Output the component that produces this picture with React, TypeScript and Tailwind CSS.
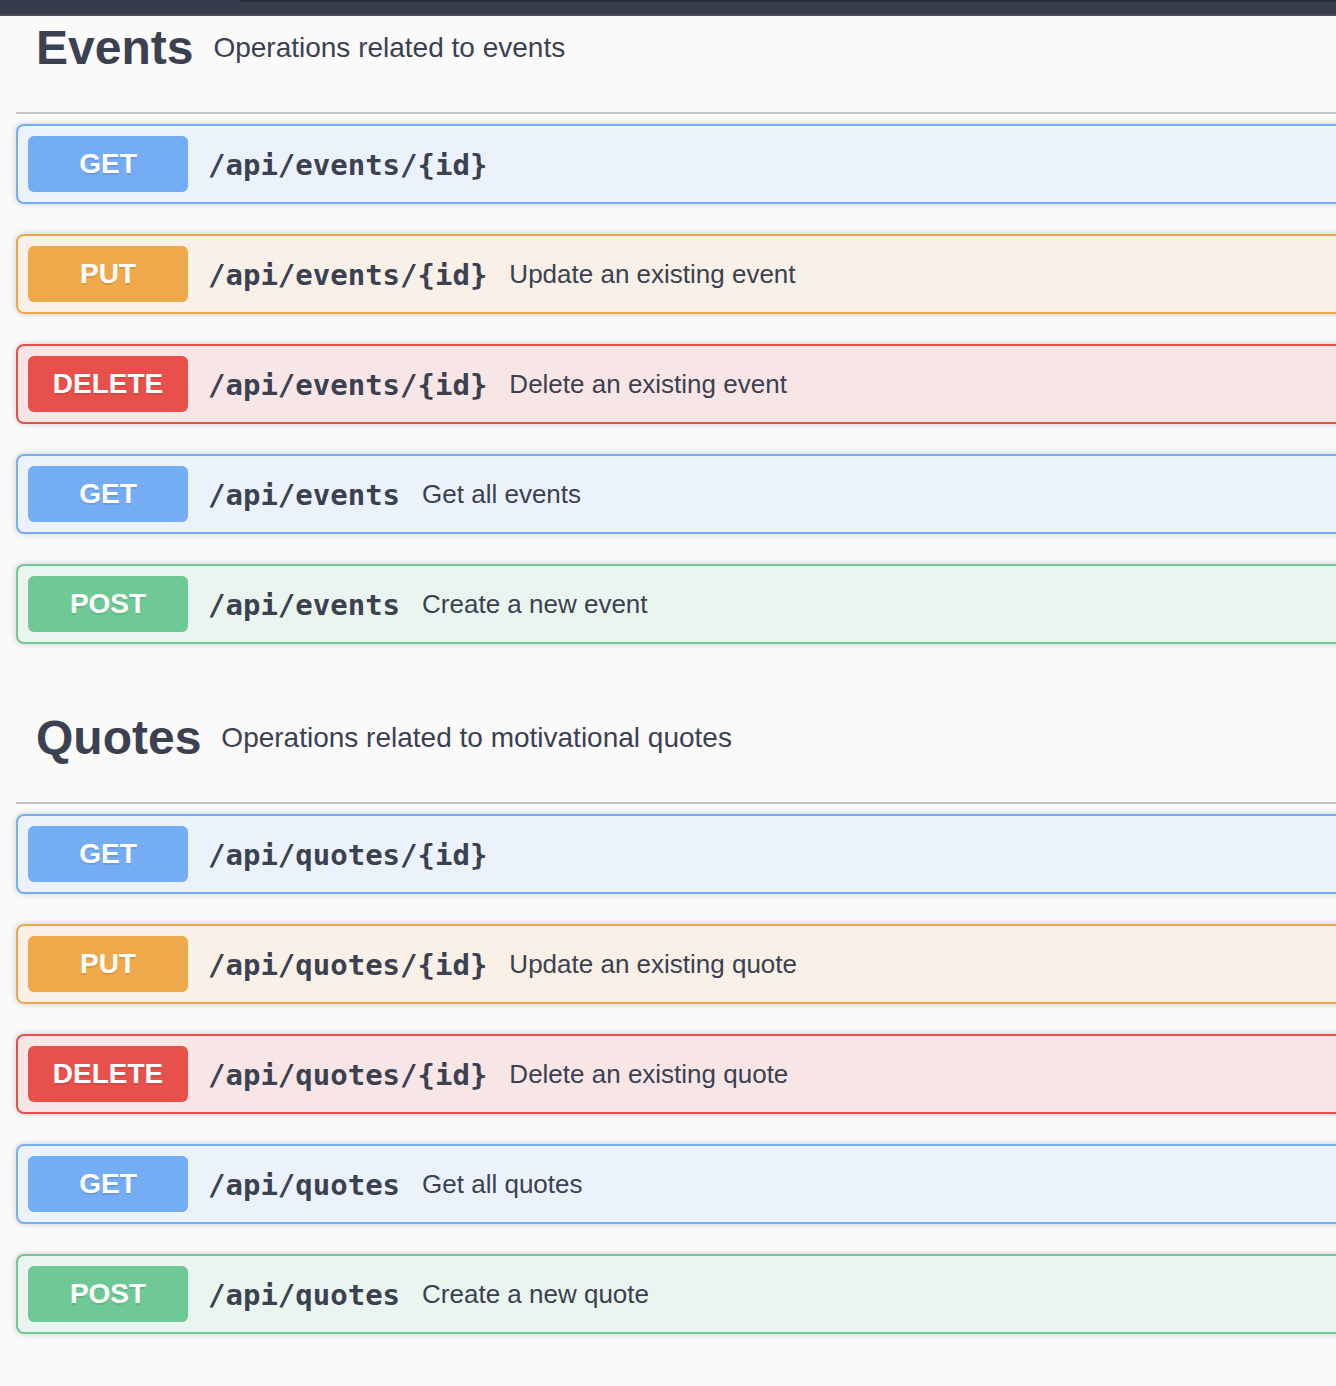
import React from "react";

type Method = "GET" | "PUT" | "DELETE" | "POST";

const styles: Record<Method, { card: string; badge: string }> = {
  GET: { card: "border-[#73adf8] bg-[#ebf2fb]", badge: "bg-[#74acf6]" },
  PUT: { card: "border-[#eea84c] bg-[#f9f0e7]", badge: "bg-[#efa84a]" },
  DELETE: { card: "border-[#e6504c] bg-[#f8e6e6]", badge: "bg-[#e8504b]" },
  POST: { card: "border-[#70c892] bg-[#ebf5ef]", badge: "bg-[#6fc994]" },
};

type Op = { method: Method; path: string; desc?: string };

const sections: { name: string; desc: string; ops: Op[] }[] = [
  {
    name: "Events",
    desc: "Operations related to events",
    ops: [
      { method: "GET", path: "/api/events/{id}" },
      { method: "PUT", path: "/api/events/{id}", desc: "Update an existing event" },
      { method: "DELETE", path: "/api/events/{id}", desc: "Delete an existing event" },
      { method: "GET", path: "/api/events", desc: "Get all events" },
      { method: "POST", path: "/api/events", desc: "Create a new event" },
    ],
  },
  {
    name: "Quotes",
    desc: "Operations related to motivational quotes",
    ops: [
      { method: "GET", path: "/api/quotes/{id}" },
      { method: "PUT", path: "/api/quotes/{id}", desc: "Update an existing quote" },
      { method: "DELETE", path: "/api/quotes/{id}", desc: "Delete an existing quote" },
      { method: "GET", path: "/api/quotes", desc: "Get all quotes" },
      { method: "POST", path: "/api/quotes", desc: "Create a new quote" },
    ],
  },
];

function OpRow({ op }: { op: Op }) {
  const s = styles[op.method];
  return (
    <div
      className={`flex items-center rounded-[8px] border-2 p-[10px] shadow-[0_0_6px_rgba(0,0,0,0.19)] ${s.card}`}
    >
      <div
        className={`flex h-[56px] w-[160px] shrink-0 items-center justify-center rounded-[6px] text-[28px] font-bold text-white [text-shadow:0_2px_0_rgba(0,0,0,0.1)] ${s.badge}`}
        style={{ fontFamily: '"Liberation Sans", Arial, sans-serif' }}
      >
        {op.method}
      </div>
      <span
        className="pl-[20px] pr-[22px] pt-[4px] text-[29px] font-bold text-[#3b4151]"
        style={{ fontFamily: '"DejaVu Sans Mono", "Liberation Mono", monospace' }}
      >
        {op.path}
      </span>
      {op.desc && (
        <span
          className="text-[26px] text-[#3b4151]"
          style={{ fontFamily: '"Liberation Sans", Arial, sans-serif' }}
        >
          {op.desc}
        </span>
      )}
    </div>
  );
}

export default function App() {
  return (
    <div
      className="min-h-[1386px] w-full overflow-hidden bg-[#fafafa]"
      style={{ fontFamily: '"Liberation Sans", Arial, sans-serif' }}
    >
      <div className="flex h-[16px] flex-col bg-[#363c4b]">
        <div className="flex h-[14px]">
          <div className="ml-[239px] h-[2px] flex-1 rounded-bl-[6px] bg-[#272b36]" />
        </div>
        <div className="h-[2px] bg-[#4a4d55]" />
      </div>
      <div className="flex w-[1420px] flex-col gap-[61px] pl-[16px]">
        {sections.map((sec, i) => (
          <section key={sec.name} className={i === 0 ? "-mt-[1px]" : ""}>
            <div className="flex items-center border-b-2 border-[#c5c6ca] pb-[36px] pl-[20px] pt-[5px]">
              <h3 className="text-[48px] font-bold leading-[56px] text-[#3b4151]">
                {sec.name}
              </h3>
              <span className="ml-[20px] text-[28px] text-[#3b4151]">{sec.desc}</span>
            </div>
            <div className="mt-[10px] flex flex-col gap-[30px]">
              {sec.ops.map((op) => (
                <OpRow key={op.method + op.path} op={op} />
              ))}
            </div>
          </section>
        ))}
      </div>
    </div>
  );
}
